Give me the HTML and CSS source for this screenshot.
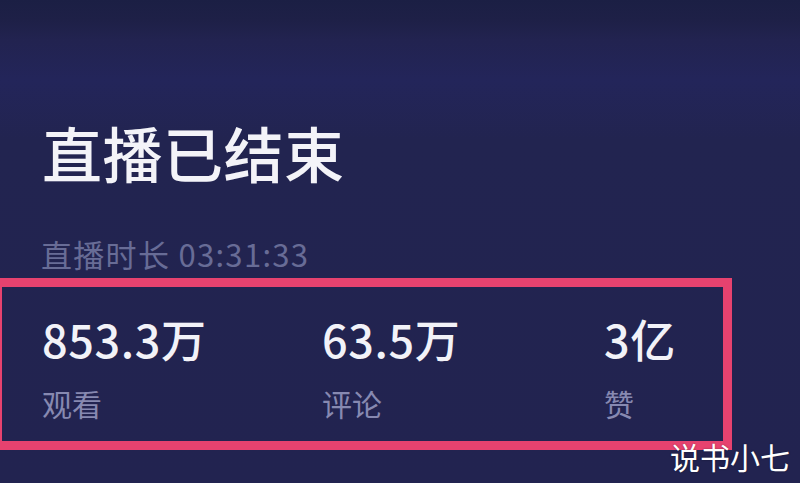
FILE: index.html
```html
<!DOCTYPE html>
<html lang="zh-CN">
<head>
<meta charset="utf-8">
<title>直播已结束</title>
<link rel="stylesheet" href="styles.css">
</head>
<body>
<main class="page">
  <h1 class="title">直播已结束</h1>
  <p class="duration">直播时长 03:31:33</p>
  <section class="stats">
    <div class="stat">
      <div class="value">853.3万</div>
      <div class="label">观看</div>
    </div>
    <div class="stat">
      <div class="value">63.5万</div>
      <div class="label">评论</div>
    </div>
    <div class="stat">
      <div class="value">3亿</div>
      <div class="label">赞</div>
    </div>
  </section>
  <div class="watermark">说书小七</div>
</main>
</body>
</html>
```
FILE: styles.css
```css
html, body {
  margin: 0;
  padding: 0;
  width: 800px;
  height: 483px;
  overflow: hidden;
}
body {
  background: linear-gradient(180deg, #1b1f44 0px, #1e2047 20px, #222350 40px, #23255a 80px, #222450 140px, #222350 483px);
  font-family: "Noto Sans CJK SC", "Noto Sans", sans-serif;
}
.page {
  position: relative;
  height: 483px;
  padding-top: 122px;
  box-sizing: border-box;
}
.title {
  margin: 0 0 0 42px;
  font-size: 60px;
  line-height: 60px;
  font-weight: 500;
  color: #f3f3f8;
  letter-spacing: 0.5px;
}
.duration {
  margin: 56px 0 0 41px;
  font-size: 31px;
  line-height: 32px;
  letter-spacing: 1.3px;
  color: #686c96;
}
.stats {
  margin: 8px 0 0 -7px;
  width: 739px;
  height: 172px;
  box-sizing: border-box;
  border: 9px solid #e6426f;
  padding: 29px 0 0 40px;
  display: grid;
  grid-template-columns: 280px 282px 1fr;
}
.stat {
  display: flex;
  flex-direction: column;
}
.value {
  font-size: 45px;
  line-height: 46px;
  font-weight: 500;
  letter-spacing: 0.6px;
  color: #f2f2f8;
}
.label {
  margin-top: 26px;
  font-size: 30px;
  line-height: 30px;
  color: #8789b1;
}
.watermark {
  position: absolute;
  right: 10px;
  top: 440px;
  font-size: 30px;
  line-height: 32px;
  color: #ffffff;
  text-shadow: 0 0 2px rgba(0,0,0,0.4);
}
```
